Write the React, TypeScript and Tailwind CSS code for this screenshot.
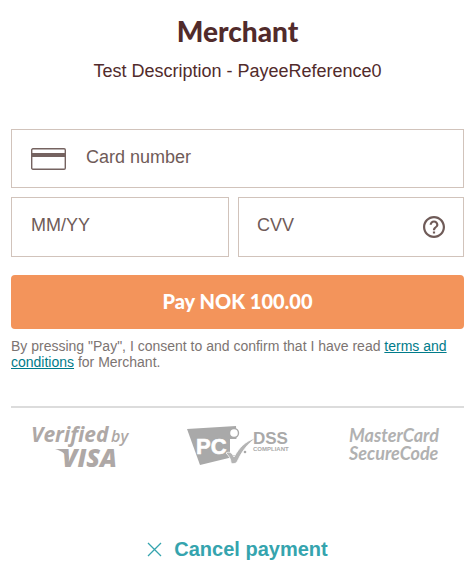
import type { FormEvent } from "react";

function CardIcon() {
  return (
    <svg width="35" height="22" viewBox="0 0 35 22" fill="none" aria-hidden="true">
      <rect x="0.700" y="0.800" width="33.600" height="20.400" rx="1.200" stroke="#756360" strokeWidth="1.400" />
      <rect x="1" y="5" width="33" height="4" fill="#756360" />
    </svg>
  );
}

function HelpIcon() {
  return (
    <svg width="22" height="22" viewBox="2 2 20 20" fill="#6f5b58" aria-hidden="true">
      <path d="M11 18h2v-2h-2v2zm1-16C6.480 2 2 6.480 2 12s4.480 10 10 10 10-4.480 10-10S17.520 2 12 2zm0 18c-4.410 0-8-3.590-8-8s3.590-8 8-8 8 3.590 8 8-3.590 8-8 8zm0-14c-2.210 0-4 1.790-4 4h2c0-1.100.9-2 2-2s2 .9 2 2c0 2-3 1.750-3 5h2c0-2.250 3-2.500 3-5 0-2.210-1.790-4-4-4z" />
    </svg>
  );
}

function VisaLogo() {
  return (
    <svg width="98" height="46" viewBox="0 0 98 46" fill="#aea8a6" role="img" aria-label="Verified by Visa" className="overflow-visible font-['Open_Sans',sans-serif] italic">
      <text x="0" y="17" fontSize="21" fontWeight="700">Verified</text>
      <text x="80" y="17" fontSize="16" fontWeight="600">by</text>
      <text x="31" y="42" fontSize="25" fontWeight="800">VISA</text>
      <path d="M24 24h12l2 11c-3-6-7-9-14-11z" />
    </svg>
  );
}

function PciLogo() {
  return (
    <svg width="104" height="42" viewBox="0 0 104 42" role="img" aria-label="PCI DSS compliant" className="overflow-visible font-['Liberation_Sans',sans-serif] font-bold">
      <path d="M0 4 49 1 50 31 13 40z" fill="#a9a9a9" />
      <text x="9" y="29" fontSize="22" fill="#fff" stroke="#fff" strokeWidth="0.600">PC</text>
      <circle cx="47" cy="8" r="5.200" fill="#a9a9a9" />
      <circle cx="47" cy="8" r="3.800" fill="#fff" />
      <path d="M43 14h7v16h-7z" fill="#fff" />
      <path d="M39 28c4-2 6 0 8 4 5-9 11-16 22-19-9 6-15 15-19 24-2 2-4 2-6 1 0-4-2-7-5-10z" fill="#b4b4b4" stroke="#fff" strokeWidth="0.800" />
      <circle cx="58" cy="27" r="1.300" fill="#a9a9a9" />
      <text x="66" y="19" fontSize="17" fill="#a9a9a9">DSS</text>
      <text x="66" y="26" fontSize="6" fill="#a9a9a9">COMPLIANT</text>
    </svg>
  );
}

function MasterCardLogo() {
  return (
    <svg width="92" height="38" viewBox="0 0 92 38" fill="#b1b1b1" role="img" aria-label="MasterCard SecureCode" className="overflow-visible font-['Lato',sans-serif] italic">
      <text x="1" y="17" fontSize="18" fontWeight="700">MasterCard</text>
      <text x="1" y="35" fontSize="18" fontWeight="700">SecureCode</text>
    </svg>
  );
}

const box = "flex items-center border border-[#d1c3bb] bg-white";
const field = "w-full min-w-0 bg-transparent pb-1 text-lg text-[#6f5b58] outline-none placeholder:text-[#6f5b58]";

export default function App() {
  return (
    <main className="bg-white px-[11px] pt-[11px] font-['Liberation_Sans',Arial,sans-serif]">
      <header className="text-center text-[#512b2b]">
        <h1 className="font-['Lato',sans-serif] text-[28px] leading-10 font-black">Merchant</h1>
        <p className="pt-1 text-lg leading-8">Test Description - PayeeReference0</p>
      </header>

      <form className="mt-[42px]" onSubmit={(e: FormEvent) => e.preventDefault()}>
        <div className={`${box} h-[59px] gap-5 px-[19px]`}>
          <span className="shrink-0">
            <CardIcon />
          </span>
          <input className={field} type="text" inputMode="numeric" placeholder="Card number" aria-label="Card number" />
        </div>
        <div className="mt-[9px] grid grid-cols-[218fr_226fr] gap-[9px]">
          <div className={`${box} h-[60px] px-[19px]`}>
            <input className={field} type="text" placeholder="MM/YY" aria-label="Expiry date" />
          </div>
          <div className={`${box} h-[60px] px-[18px]`}>
            <input className={field} type="text" placeholder="CVV" aria-label="CVV" />
            <button type="button" aria-label="What is CVV?" className="shrink-0">
              <HelpIcon />
            </button>
          </div>
        </div>
        <button type="submit" className="mt-[18px] h-[54px] w-full rounded bg-[#f3945b] pb-0.5 font-['Lato',sans-serif] text-xl font-black text-white">
          Pay NOK 100.00
        </button>
        <p className="mt-[9px] text-sm leading-4 text-[#7c7472]">
          By pressing "Pay", I consent to and confirm that I have read{" "}
          <a href="#terms" className="text-[#007b8a] underline">terms and conditions</a> for Merchant.
        </p>
      </form>

      <div className="mt-9 flex items-start justify-between border-t-2 border-[#dcdcdc] pt-[17px] pr-6 pl-5">
        <VisaLogo />
        <PciLogo />
        <MasterCardLogo />
      </div>

      <div className="mt-[62px] flex justify-center">
        <button type="button" className="flex items-center gap-3 text-xl leading-8 font-bold text-[#35a4ae]">
          <svg width="15" height="15" viewBox="0 0 15 15" stroke="currentColor" strokeWidth="1.300" aria-hidden="true">
            <path d="M1 1 14 14M14 1 1 14" />
          </svg>
          Cancel payment
        </button>
      </div>
    </main>
  );
}
